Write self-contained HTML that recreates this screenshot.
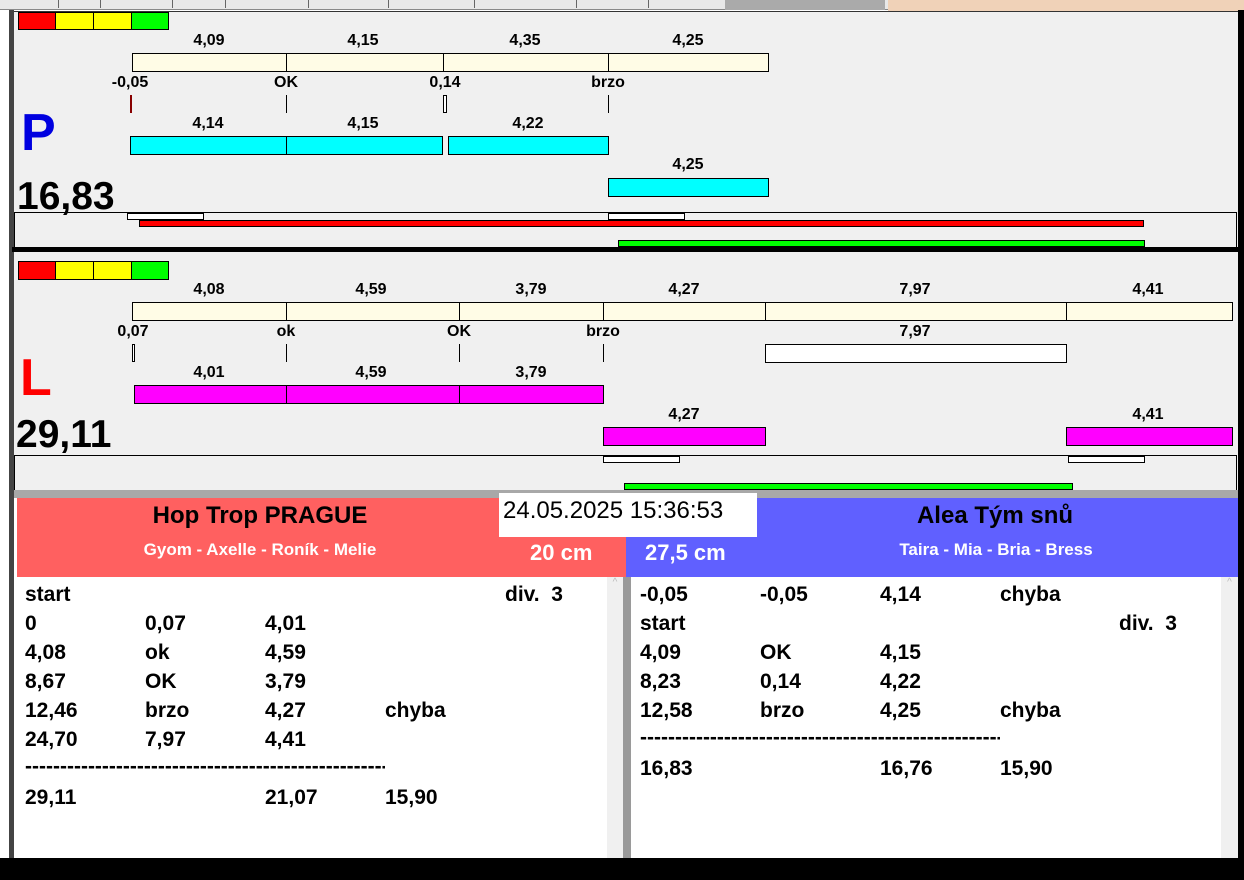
<!DOCTYPE html>
<html><head><meta charset="utf-8"><style>
*{margin:0;padding:0;box-sizing:border-box}
body{width:1244px;height:880px;background:#fff;position:relative;overflow:hidden;font-family:"Liberation Sans",Arial,sans-serif;font-weight:bold;color:#000}
.a{position:absolute}
.lb{position:absolute;width:100px;text-align:center;font-size:16px;line-height:18px}
.bx{position:absolute;border:1px solid #000}
.t{position:absolute;font-size:21px;line-height:24px}
.d{position:absolute;font-size:21px;line-height:24px;overflow:hidden;white-space:nowrap;width:360px}
</style></head><body>
<div class="a" style="left:0;top:0;width:888px;height:10px;background:#e8e8e8;border-bottom:1px solid #888"></div>
<div class="a" style="left:58px;top:0;width:1px;height:8px;background:#666"></div>
<div class="a" style="left:100px;top:0;width:1px;height:8px;background:#666"></div>
<div class="a" style="left:172px;top:0;width:1px;height:8px;background:#666"></div>
<div class="a" style="left:225px;top:0;width:1px;height:8px;background:#666"></div>
<div class="a" style="left:308px;top:0;width:1px;height:8px;background:#666"></div>
<div class="a" style="left:388px;top:0;width:1px;height:8px;background:#666"></div>
<div class="a" style="left:474px;top:0;width:1px;height:8px;background:#666"></div>
<div class="a" style="left:576px;top:0;width:1px;height:8px;background:#666"></div>
<div class="a" style="left:648px;top:0;width:1px;height:8px;background:#666"></div>
<div class="a" style="left:725px;top:0;width:160px;height:10px;background:#aaa"></div>
<div class="a" style="left:888px;top:0;width:356px;height:12px;background:#f0d2b8"></div>
<div class="a" style="left:9px;top:10px;width:5px;height:850px;background:#444"></div>
<div class="a" style="left:1238px;top:10px;width:6px;height:870px;background:#000"></div>
<div class="a" style="left:14px;top:11px;width:1224px;height:236px;background:#f0f0f0;border-top:1px solid #333"></div>
<div class="a" style="left:12px;top:247px;width:1226px;height:5px;background:#000"></div>
<div class="a" style="left:14px;top:252px;width:1224px;height:238px;background:#f0f0f0"></div>
<div class="a" style="left:14px;top:490px;width:1224px;height:8px;background:#a8a8a8"></div>

<div class="a" style="left:18px;top:12px;width:38px;height:18px;background:#f00;border:1px solid #000"></div>
<div class="a" style="left:56px;top:12px;width:38px;height:18px;background:#ff0;border:1px solid #000;border-left:0"></div>
<div class="a" style="left:94px;top:12px;width:38px;height:18px;background:#ff0;border:1px solid #000;border-left:0"></div>
<div class="a" style="left:132px;top:12px;width:37px;height:18px;background:#0f0;border:1px solid #000;border-left:0"></div>
<div class="lb" style="left:159px;top:32px">4,09</div>
<div class="lb" style="left:313px;top:32px">4,15</div>
<div class="lb" style="left:475px;top:32px">4,35</div>
<div class="lb" style="left:638px;top:32px">4,25</div>
<div class="bx" style="left:132px;top:53px;width:155px;height:19px;background:#fffce6"></div>
<div class="bx" style="left:286px;top:53px;width:158px;height:19px;background:#fffce6"></div>
<div class="bx" style="left:443px;top:53px;width:166px;height:19px;background:#fffce6"></div>
<div class="bx" style="left:608px;top:53px;width:161px;height:19px;background:#fffce6"></div>
<div class="lb" style="left:80px;top:74px">-0,05</div>
<div class="lb" style="left:236px;top:74px">OK</div>
<div class="lb" style="left:395px;top:74px">0,14</div>
<div class="lb" style="left:558px;top:74px">brzo</div>
<div class="a" style="left:130px;top:95px;width:2px;height:18px;background:#800"></div>
<div class="a" style="left:286px;top:95px;width:1px;height:18px;background:#000"></div>
<div class="bx" style="left:443px;top:95px;width:4px;height:18px;background:#fff"></div>
<div class="a" style="left:608px;top:95px;width:1px;height:18px;background:#000"></div>
<div class="a" style="left:21px;top:103px;font-size:52px;line-height:60px;color:#0000e0">P</div>
<div class="lb" style="left:158px;top:115px">4,14</div>
<div class="lb" style="left:313px;top:115px">4,15</div>
<div class="lb" style="left:478px;top:115px">4,22</div>
<div class="bx" style="left:130px;top:136px;width:157px;height:19px;background:#0ff"></div>
<div class="bx" style="left:286px;top:136px;width:157px;height:19px;background:#0ff"></div>
<div class="bx" style="left:448px;top:136px;width:161px;height:19px;background:#0ff"></div>
<div class="lb" style="left:638px;top:156px">4,25</div>
<div class="bx" style="left:608px;top:178px;width:161px;height:19px;background:#0ff"></div>
<div class="a" style="left:17px;top:175px;font-size:39px;line-height:44px">16,83</div>
<div class="a" style="left:14px;top:212px;width:1223px;height:36px;border-top:1px solid #000;border-right:1px solid #000;border-left:1px solid #000"></div>
<div class="bx" style="left:127px;top:213px;width:77px;height:7px;background:#fff"></div>
<div class="bx" style="left:608px;top:213px;width:77px;height:7px;background:#fff"></div>
<div class="bx" style="left:139px;top:220px;width:1005px;height:7px;background:#f00"></div>
<div class="bx" style="left:618px;top:240px;width:527px;height:7px;background:#0f0"></div>

<div class="a" style="left:18px;top:261px;width:38px;height:19px;background:#f00;border:1px solid #000"></div>
<div class="a" style="left:56px;top:261px;width:38px;height:19px;background:#ff0;border:1px solid #000;border-left:0"></div>
<div class="a" style="left:94px;top:261px;width:38px;height:19px;background:#ff0;border:1px solid #000;border-left:0"></div>
<div class="a" style="left:132px;top:261px;width:37px;height:19px;background:#0f0;border:1px solid #000;border-left:0"></div>
<div class="lb" style="left:159px;top:281px">4,08</div>
<div class="lb" style="left:321px;top:281px">4,59</div>
<div class="lb" style="left:481px;top:281px">3,79</div>
<div class="lb" style="left:634px;top:281px">4,27</div>
<div class="lb" style="left:865px;top:281px">7,97</div>
<div class="lb" style="left:1098px;top:281px">4,41</div>
<div class="bx" style="left:132px;top:302px;width:155px;height:19px;background:#fffce6"></div>
<div class="bx" style="left:286px;top:302px;width:174px;height:19px;background:#fffce6"></div>
<div class="bx" style="left:459px;top:302px;width:145px;height:19px;background:#fffce6"></div>
<div class="bx" style="left:603px;top:302px;width:163px;height:19px;background:#fffce6"></div>
<div class="bx" style="left:765px;top:302px;width:302px;height:19px;background:#fffce6"></div>
<div class="bx" style="left:1066px;top:302px;width:167px;height:19px;background:#fffce6"></div>
<div class="lb" style="left:83px;top:323px">0,07</div>
<div class="lb" style="left:236px;top:323px">ok</div>
<div class="lb" style="left:409px;top:323px">OK</div>
<div class="lb" style="left:553px;top:323px">brzo</div>
<div class="lb" style="left:865px;top:323px">7,97</div>
<div class="bx" style="left:132px;top:344px;width:3px;height:18px;background:#fff"></div>
<div class="a" style="left:286px;top:344px;width:1px;height:18px;background:#000"></div>
<div class="a" style="left:459px;top:344px;width:1px;height:18px;background:#000"></div>
<div class="a" style="left:603px;top:344px;width:1px;height:18px;background:#000"></div>
<div class="bx" style="left:765px;top:344px;width:302px;height:19px;background:#fff"></div>
<div class="a" style="left:20px;top:348px;font-size:52px;line-height:60px;color:#f00">L</div>
<div class="lb" style="left:159px;top:364px">4,01</div>
<div class="lb" style="left:321px;top:364px">4,59</div>
<div class="lb" style="left:481px;top:364px">3,79</div>
<div class="bx" style="left:134px;top:385px;width:153px;height:19px;background:#f0f"></div>
<div class="bx" style="left:286px;top:385px;width:174px;height:19px;background:#f0f"></div>
<div class="bx" style="left:459px;top:385px;width:145px;height:19px;background:#f0f"></div>
<div class="lb" style="left:634px;top:406px">4,27</div>
<div class="lb" style="left:1098px;top:406px">4,41</div>
<div class="bx" style="left:603px;top:427px;width:163px;height:19px;background:#f0f"></div>
<div class="bx" style="left:1066px;top:427px;width:167px;height:19px;background:#f0f"></div>
<div class="a" style="left:16px;top:413px;font-size:39px;line-height:44px">29,11</div>
<div class="a" style="left:14px;top:455px;width:1223px;height:35px;border-top:1px solid #000;border-right:1px solid #000;border-left:1px solid #000"></div>
<div class="bx" style="left:603px;top:456px;width:77px;height:7px;background:#fff"></div>
<div class="bx" style="left:1068px;top:456px;width:77px;height:7px;background:#fff"></div>
<div class="bx" style="left:624px;top:483px;width:449px;height:7px;background:#0f0"></div>

<div class="a" style="left:17px;top:498px;width:609px;height:79px;background:#ff6060"></div>
<div class="a" style="left:626px;top:498px;width:612px;height:79px;background:#6060ff"></div>
<div class="a" style="left:60px;top:501px;width:400px;text-align:center;font-size:24px;line-height:30px">Hop Trop PRAGUE</div>
<div class="a" style="left:60px;top:540px;width:400px;text-align:center;font-size:17px;line-height:20px;color:#fff">Gyom - Axelle - Roník - Melie</div>
<div class="a" style="left:530px;top:540px;font-size:22px;line-height:26px;color:#fff">20 cm</div>
<div class="a" style="left:645px;top:540px;font-size:22px;line-height:26px;color:#fff">27,5 cm</div>
<div class="a" style="left:795px;top:501px;width:400px;text-align:center;font-size:24px;line-height:30px">Alea Tým snů</div>
<div class="a" style="left:796px;top:540px;width:400px;text-align:center;font-size:17px;line-height:20px;color:#fff">Taira - Mia - Bria - Bress</div>
<div class="a" style="left:499px;top:493px;width:258px;height:44px;background:#fff;font-weight:normal;font-size:24px;line-height:36px;padding-left:4px">24.05.2025 15:36:53</div>

<div class="a" style="left:17px;top:577px;width:590px;height:281px;background:#fff"></div>
<div class="a" style="left:607px;top:577px;width:16px;height:281px;background:#f0f0f0;color:#bbb;font-size:10px;text-align:center;font-weight:normal">^</div>
<div class="a" style="left:623px;top:577px;width:8px;height:281px;background:#9a9a9a"></div>
<div class="a" style="left:631px;top:577px;width:590px;height:281px;background:#fff"></div>
<div class="a" style="left:1221px;top:577px;width:17px;height:281px;background:#f0f0f0;color:#bbb;font-size:10px;text-align:center;font-weight:normal">^</div>
<div class="a" style="left:0;top:858px;width:1244px;height:22px;background:#000"></div>

<div class="t" style="left:25px;top:583px">start</div><div class="t" style="left:505px;top:583px">div.&nbsp; 3</div>
<div class="t" style="left:25px;top:612px">0</div><div class="t" style="left:145px;top:612px">0,07</div><div class="t" style="left:265px;top:612px">4,01</div>
<div class="t" style="left:25px;top:641px">4,08</div><div class="t" style="left:145px;top:641px">ok</div><div class="t" style="left:265px;top:641px">4,59</div>
<div class="t" style="left:25px;top:670px">8,67</div><div class="t" style="left:145px;top:670px">OK</div><div class="t" style="left:265px;top:670px">3,79</div>
<div class="t" style="left:25px;top:699px">12,46</div><div class="t" style="left:145px;top:699px">brzo</div><div class="t" style="left:265px;top:699px">4,27</div><div class="t" style="left:385px;top:699px">chyba</div>
<div class="t" style="left:25px;top:728px">24,70</div><div class="t" style="left:145px;top:728px">7,97</div><div class="t" style="left:265px;top:728px">4,41</div>
<div class="d" style="left:25px;top:755px">------------------------------------------------------------</div>
<div class="t" style="left:25px;top:786px">29,11</div><div class="t" style="left:265px;top:786px">21,07</div><div class="t" style="left:385px;top:786px">15,90</div>

<div class="t" style="left:640px;top:583px">-0,05</div><div class="t" style="left:760px;top:583px">-0,05</div><div class="t" style="left:880px;top:583px">4,14</div><div class="t" style="left:1000px;top:583px">chyba</div>
<div class="t" style="left:640px;top:612px">start</div><div class="t" style="left:1119px;top:612px">div.&nbsp; 3</div>
<div class="t" style="left:640px;top:641px">4,09</div><div class="t" style="left:760px;top:641px">OK</div><div class="t" style="left:880px;top:641px">4,15</div>
<div class="t" style="left:640px;top:670px">8,23</div><div class="t" style="left:760px;top:670px">0,14</div><div class="t" style="left:880px;top:670px">4,22</div>
<div class="t" style="left:640px;top:699px">12,58</div><div class="t" style="left:760px;top:699px">brzo</div><div class="t" style="left:880px;top:699px">4,25</div><div class="t" style="left:1000px;top:699px">chyba</div>
<div class="d" style="left:640px;top:726px">------------------------------------------------------------</div>
<div class="t" style="left:640px;top:757px">16,83</div><div class="t" style="left:880px;top:757px">16,76</div><div class="t" style="left:1000px;top:757px">15,90</div>
</body></html>
